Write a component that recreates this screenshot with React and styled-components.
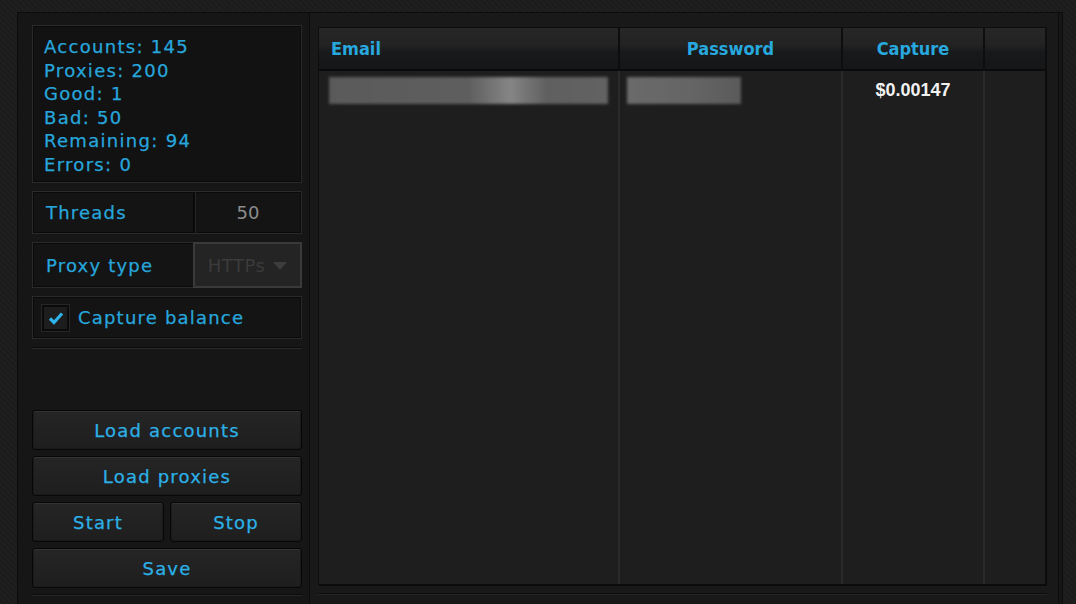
import React from "react";
import styled, { createGlobalStyle } from "styled-components";

const Global = createGlobalStyle`
  html, body {
    margin: 0;
    padding: 0;
    background: #1b1b1b;
  }
  * {
    box-sizing: border-box;
  }
`;

const stats = [
  ["Accounts", 145],
  ["Proxies", 200],
  ["Good", 1],
  ["Bad", 50],
  ["Remaining", 94],
  ["Errors", 0],
];

const columns = [
  { title: "Email", width: 301, align: "left" },
  { title: "Password", width: 223, align: "center" },
  { title: "Capture", width: 142, align: "center" },
  { title: "", width: 0, align: "center" },
];

const App = () => {
  return (
    <>
      <Global />
      <Frame>
        <Window>
          <Side>
            <Stats>
              {stats.map(([label, value]) => (
                <StatLine key={label}>
                  {label}: {value}
                </StatLine>
              ))}
            </Stats>

            <Field>
              <FieldLabel>Threads</FieldLabel>
              <FieldValue>50</FieldValue>
            </Field>

            <Field tall>
              <FieldLabel>Proxy type</FieldLabel>
              <Select>
                <span>HTTPs</span>
                <Caret />
              </Select>
            </Field>

            <Field>
              <CheckRow>
                <CheckBox>
                  <svg width="16" height="14" viewBox="0 0 16 14">
                    <path
                      d="M2 7.5 L6 11.5 L14 2.5"
                      fill="none"
                      stroke="#2fb4ea"
                      strokeWidth="3.2"
                    />
                  </svg>
                </CheckBox>
                <FieldLabel as="span">Capture balance</FieldLabel>
              </CheckRow>
            </Field>

            <Divider />

            <Buttons>
              <Button>Load accounts</Button>
              <Button>Load proxies</Button>
              <ButtonPair>
                <Button>Start</Button>
                <Button>Stop</Button>
              </ButtonPair>
              <Button>Save</Button>
            </Buttons>

            <Rule />
          </Side>

          <Main>
            <Table>
              {columns.map((col, i) => (
                <Column key={i} width={col.width} last={i === columns.length - 1}>
                  <ColHead align={col.align}>{col.title}</ColHead>
                  <ColBody>
                    {i === 0 && (
                      <Cell align="left">
                        <Blur style={{ width: 279 }} spot />
                      </Cell>
                    )}
                    {i === 1 && (
                      <Cell align="left">
                        <Blur style={{ width: 114, marginLeft: -3 }} />
                      </Cell>
                    )}
                    {i === 2 && (
                      <Cell align="center">
                        <Money>$0.00147</Money>
                      </Cell>
                    )}
                  </ColBody>
                </Column>
              ))}
            </Table>
            <Rule />
          </Main>
        </Window>
      </Frame>
    </>
  );
};

export default App;

const Frame = styled.div`
  width: 1076px;
  height: 604px;
  overflow: hidden;
  padding: 12px 0 0 17px;
  background: #1c1c1c;
  background-image: repeating-linear-gradient(
    45deg,
    rgba(255, 255, 255, 0.012) 0 2px,
    rgba(0, 0, 0, 0.02) 2px 4px
  );
`;

const Window = styled.div`
  width: 1046px;
  height: 620px;
  border: 1px solid #0c0c0c;
  border-bottom: none;
  background: #161616;
  display: grid;
  grid-template-columns: 270px 750px;
  align-items: start;
  column-gap: 7px;
  padding: 0 3px 0 14px;
  font-family: "DejaVu Sans", "Verdana", sans-serif;
`;

const Side = styled.div`
  display: flex;
  flex-direction: column;
  padding-top: 12px;
  height: 583px;
`;

const Stats = styled.div`
  height: 158px;
  padding: 9px 11px;
  background: #121212;
  border: 1px solid #2a2a2a;
  box-shadow: inset 0 0 0 1px #0a0a0a;
`;

const StatLine = styled.div`
  font-size: 18px;
  line-height: 23.6px;
  letter-spacing: 1.3px;
  color: #27a6dc;
  -webkit-text-stroke: 0.25px #27a6dc;
`;

const Field = styled.div`
  display: flex;
  margin-top: 8px;
  height: ${(p) => (p.tall ? "46px" : "43px")};
  background: #141414;
  border: 1px solid #2a2a2a;
  box-shadow: inset 0 0 0 1px #0a0a0a;
`;

const FieldLabel = styled.div`
  flex: 1;
  display: flex;
  align-items: center;
  padding-left: 13px;
  font-size: 18px;
  letter-spacing: 1.2px;
  color: #27a6dc;
  -webkit-text-stroke: 0.25px #27a6dc;
`;

const FieldValue = styled.div`
  width: 108px;
  display: flex;
  align-items: center;
  justify-content: center;
  font-size: 18px;
  color: #8c8c8c;
  border-left: 2px solid #0a0a0a;
  box-shadow: inset 1px 0 0 #262626;
`;

const Select = styled.div`
  width: 109px;
  margin: -1px -1px -1px 0;
  display: flex;
  align-items: center;
  justify-content: center;
  gap: 8px;
  background: #242424;
  border: 2px solid #3a3a3a;
  color: #3b3b3b;
  font-size: 18px;
  letter-spacing: 0.5px;
`;

const Caret = styled.div`
  width: 0;
  height: 0;
  border-left: 7px solid transparent;
  border-right: 7px solid transparent;
  border-top: 8px solid #3d3d3d;
  margin-top: 2px;
`;

const CheckRow = styled.label`
  flex: 1;
  display: flex;
  align-items: center;
  padding-left: 9px;

  span {
    padding-left: 9px;
    flex: 0 1 auto;
  }
`;

const CheckBox = styled.div`
  width: 27px;
  height: 26px;
  display: flex;
  align-items: center;
  justify-content: center;
  background: #1d1d1d;
  border: 2px solid #0b0b0b;
  box-shadow: 0 0 0 1px #262626;
`;

const Divider = styled.div`
  margin-top: 8px;
  height: 2px;
  background: #0b0b0b;
  border-bottom: 1px solid #2a2a2a;
`;

const Buttons = styled.div`
  margin-top: auto;
  display: flex;
  flex-direction: column;
  gap: 6px;
`;

const ButtonPair = styled.div`
  display: grid;
  grid-template-columns: 1fr 1fr;
  gap: 6px;
`;

const Button = styled.div`
  height: 40px;
  display: flex;
  align-items: center;
  justify-content: center;
  border: 1px solid #070707;
  border-radius: 3px;
  background: linear-gradient(#252525, #1e1e1e);
  box-shadow: inset 0 1px 0 #333, inset 0 0 0 1px #1a1a1a;
  color: #2cb0e6;
  font-size: 18px;
  letter-spacing: 1.2px;
  -webkit-text-stroke: 0.25px #2cb0e6;
  cursor: pointer;
`;

const Rule = styled.div`
  margin-top: 6px;
  height: 2px;
  flex: none;
  background: #0b0b0b;
  border-bottom: 1px solid #262626;
`;

const Main = styled.div`
  display: flex;
  flex-direction: column;
  padding: 14px 11px 0 8px;
  border-left: 1px solid #0c0c0c;
  border-right: 1px solid #0c0c0c;
  background: #191919;
  height: 620px;

  ${Rule} {
    margin-top: 8px;
  }
`;

const Table = styled.div`
  width: 728px;
  height: 558px;
  flex: none;
  display: flex;
  background: #1e1e1e;
  border: 1px solid #0d0d0d;
  box-shadow: 1px 1px 0 #0a0a0a;
`;

const Column = styled.div`
  display: flex;
  flex-direction: column;
  ${(p) => (p.last ? "flex: 1;" : `width: ${p.width}px;`)}
  border-right: ${(p) => (p.last ? "none" : "2px solid #2a2a2a")};
`;

const ColHead = styled.div`
  height: 43px;
  display: flex;
  align-items: center;
  justify-content: ${(p) => (p.align === "left" ? "flex-start" : "center")};
  padding-left: ${(p) => (p.align === "left" ? "12px" : "0")};
  margin-right: -2px;
  background: linear-gradient(#272727 0%, #232323 40%, #18191b 60%, #151618 100%);
  border-right: 2px solid #0e0e0e;
  border-bottom: 2px solid #0b0b0b;
  font-family: "DejaVu Sans Condensed", "DejaVu Sans", sans-serif;
  font-stretch: condensed;
  font-weight: bold;
  font-size: 18px;
  color: #27a8de;
`;

const ColBody = styled.div`
  flex: 1;
  padding-top: 4px;
`;

const Cell = styled.div`
  height: 30px;
  display: flex;
  align-items: center;
  justify-content: ${(p) => (p.align === "left" ? "flex-start" : "center")};
  padding-left: ${(p) => (p.align === "left" ? "10px" : "0")};
`;

const Blur = styled.div`
  height: 27px;
  background: ${(p) =>
    p.spot
      ? "linear-gradient(90deg, #5a5a5a 0%, #5e5e5e 50%, #858585 65%, #5f5f5f 78%, #626262 100%)"
      : "linear-gradient(90deg, #6a6a6a 0%, #646464 60%, #5a5a5a 100%)"};
  filter: blur(1.5px);
`;

const Money = styled.div`
  font-family: "Liberation Sans", Arial, sans-serif;
  font-weight: bold;
  font-size: 18px;
  color: #f2f2f2;
`;
